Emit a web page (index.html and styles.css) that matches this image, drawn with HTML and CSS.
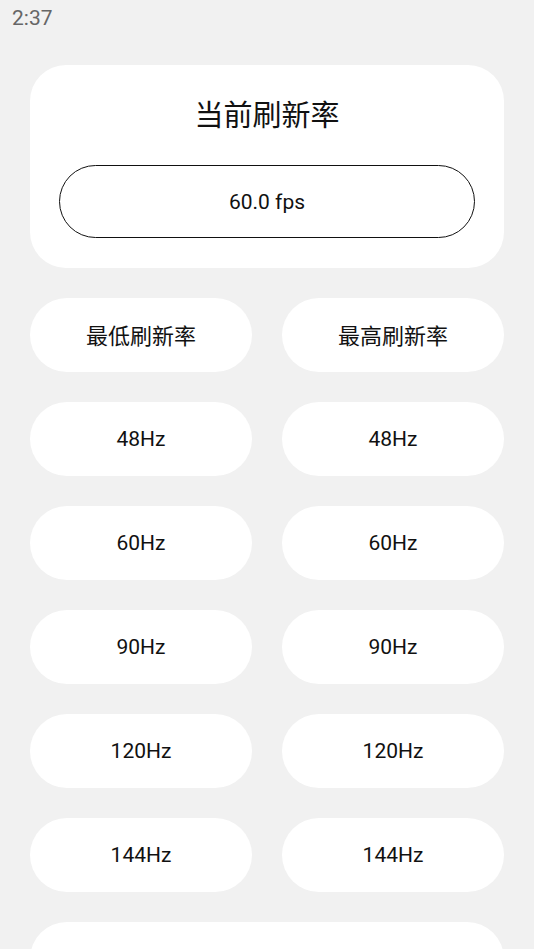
FILE: index.html
```html
<!DOCTYPE html>
<html lang="zh-CN">
<head>
<meta charset="utf-8">
<meta name="viewport" content="width=device-width, initial-scale=1">
<title>刷新率</title>
<link rel="stylesheet" href="styles.css">
</head>
<body>
<div class="status-bar">2:37</div>
<main class="content">
  <section class="card">
    <h1 class="card-title">当前刷新率</h1>
    <div class="fps-pill">60.0 fps</div>
  </section>
  <div class="grid">
    <div class="btn cjk">最低刷新率</div>
    <div class="btn cjk">最高刷新率</div>
    <div class="btn">48Hz</div>
    <div class="btn">48Hz</div>
    <div class="btn">60Hz</div>
    <div class="btn">60Hz</div>
    <div class="btn">90Hz</div>
    <div class="btn">90Hz</div>
    <div class="btn">120Hz</div>
    <div class="btn">120Hz</div>
    <div class="btn">144Hz</div>
    <div class="btn">144Hz</div>
    <div class="btn cjk wide">关于</div>
  </div>
</main>
</body>
</html>
```
FILE: styles.css
```css
html, body {
  margin: 0;
  padding: 0;
  background: #f1f1f1;
  font-family: Roboto, "Noto Sans CJK SC", sans-serif;
  color: #111;
  overflow: hidden;
}
.status-bar {
  height: 36px;
  line-height: 36px;
  padding-left: 12px;
  font-size: 21px;
  color: #666;
  font-family: Roboto, sans-serif;
}
.content {
  padding: 29px 30px 0;
}
.card {
  background: #fff;
  border-radius: 36px;
  padding: 28px 29px 30px;
}
.card-title {
  margin: 0;
  text-align: center;
  font-family: "Noto Sans CJK SC", sans-serif;
  font-weight: 400;
  font-size: 29px;
  line-height: 40px;
  color: #111;
}
.fps-pill {
  margin-top: 32px;
  height: 73px;
  box-sizing: border-box;
  border: 1.5px solid #111;
  border-radius: 37px;
  display: flex;
  align-items: center;
  justify-content: center;
  font-size: 21px;
  font-family: Roboto, sans-serif;
}
.grid {
  margin-top: 30px;
  display: grid;
  grid-template-columns: 1fr 1fr;
  grid-auto-rows: 74px;
  column-gap: 30px;
  row-gap: 30px;
}
.btn {
  background: #fff;
  border-radius: 37px;
  display: flex;
  align-items: center;
  justify-content: center;
  font-size: 21px;
  font-family: Roboto, sans-serif;
  color: #111;
}
.btn.cjk {
  font-family: "Noto Sans CJK SC", sans-serif;
  font-size: 22px;
  padding-bottom: 3px;
}
.btn.wide {
  grid-column: 1 / span 2;
}
```
